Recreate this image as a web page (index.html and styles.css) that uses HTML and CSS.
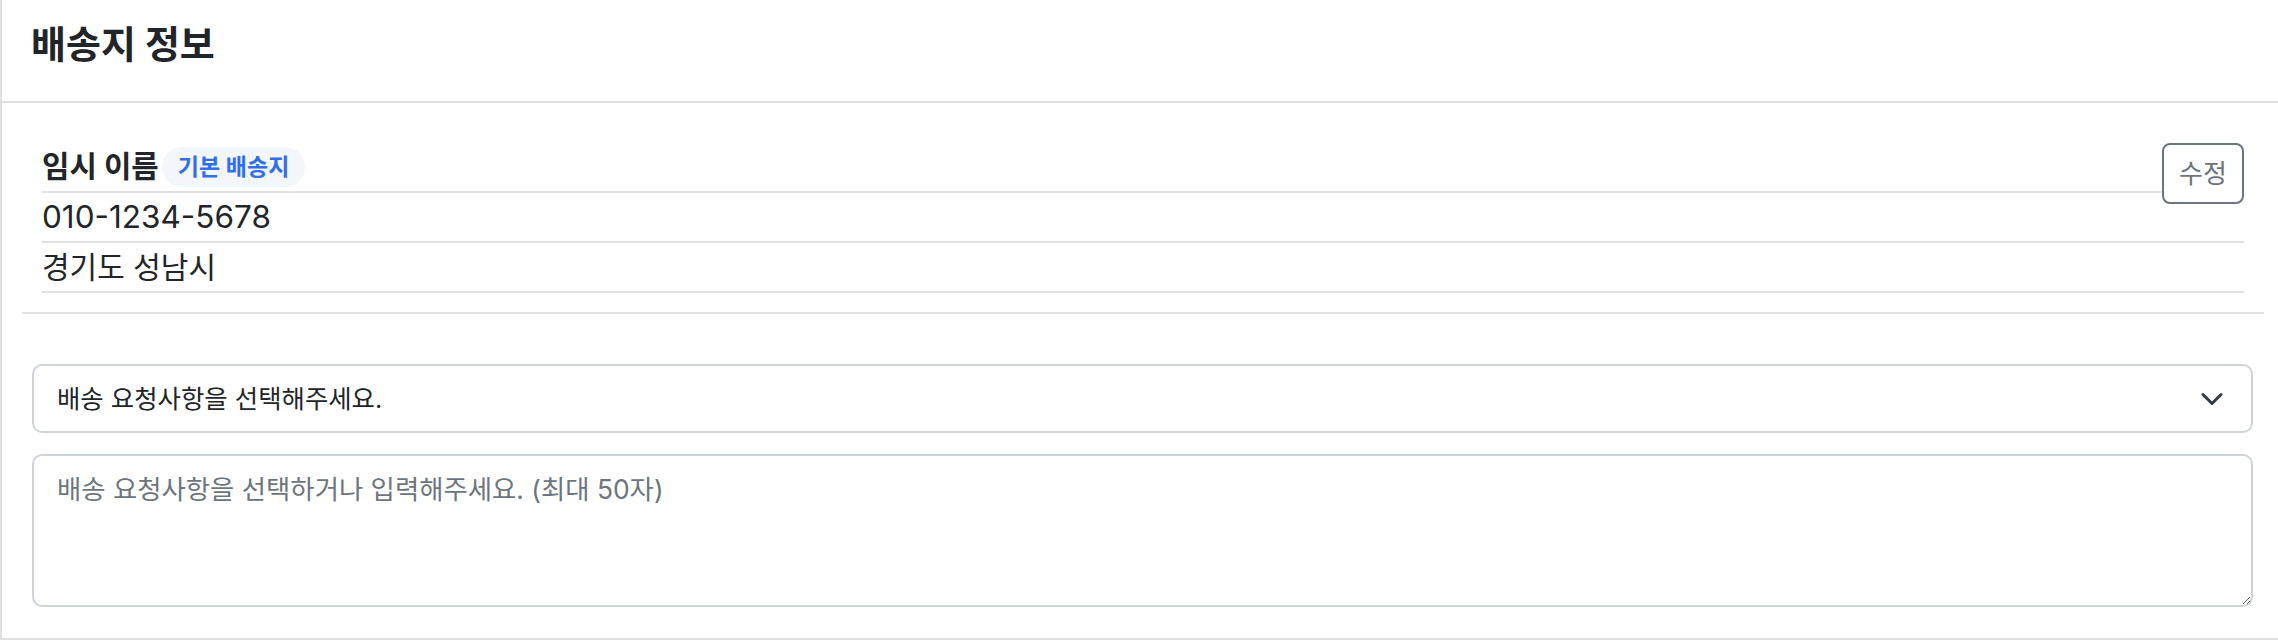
FILE: index.html
```html
<!DOCTYPE html>
<html lang="ko">
<head>
<meta charset="utf-8">
<title>배송지 정보</title>
<link rel="stylesheet" href="styles.css">
</head>
<body>
<div class="card">
  <div class="card-header">
    <h2 class="title">배송지 정보</h2>
  </div>
  <div class="card-body">
    <div class="address">
      <ul class="addr-list">
        <li class="addr-row"><strong class="name">임시 이름</strong><span class="badge">기본 배송지</span></li>
        <li class="addr-row phone">010-1234-5678</li>
        <li class="addr-row">경기도 성남시</li>
      </ul>
      <button class="edit-btn" type="button">수정</button>
    </div>
    <hr class="divider">
    <div class="request">
      <div class="select-wrap">
        <select class="select">
          <option>배송 요청사항을 선택해주세요.</option>
        </select>
        <svg class="chevron" width="22" height="13" viewBox="0 0 22 13" aria-hidden="true">
          <polyline points="2,2 11,11 20,2" fill="none" stroke="#343a40" stroke-width="3" stroke-linecap="round" stroke-linejoin="round"/>
        </svg>
      </div>
      <textarea class="memo" placeholder="배송 요청사항을 선택하거나 입력해주세요. (최대 50자)"></textarea>
    </div>
  </div>
</div>
</body>
</html>
```

FILE: styles.css
```css
* {
  box-sizing: border-box;
}

html, body {
  margin: 0;
  padding: 0;
  background: #ffffff;
}

body {
  font-family: Inter, "Noto Sans CJK KR", sans-serif;
  color: #212529;
}

.card {
  width: 100%;
  border-left: 2px solid #dfdfdf;
  border-bottom: 2px solid #dfdfdf;
  background: #ffffff;
}

.card-header {
  height: 103px;
  padding: 24px 29px 0;
  border-bottom: 2px solid #dfdfdf;
}

.title {
  margin: 0;
  font-size: 38px;
  line-height: 40px;
  font-weight: 700;
  color: #212529;
}

.card-body {
  padding: 40px 14px 31px 20px;
}

.address {
  position: relative;
  margin: 0 20px;
}

.addr-list {
  list-style: none;
  margin: 0;
  padding: 0;
}

.addr-row {
  display: flex;
  align-items: center;
  height: 50px;
  border-bottom: 2px solid #e0e0e0;
  font-size: 30px;
  line-height: 1;
  color: #212529;
}

.phone {
  font-size: 31.5px;
}

.name {
  font-size: 29.8px;
  font-weight: 700;
}

.badge {
  display: inline-flex;
  align-items: center;
  height: 40px;
  margin-left: 3px;
  padding: 0 16px;
  border-radius: 20px;
  background: #f3f6fb;
  color: #2f6fed;
  font-size: 23px;
  font-weight: 600;
}

.edit-btn {
  position: absolute;
  top: 0;
  right: 0;
  width: 82px;
  height: 61px;
  padding: 0;
  border: 2px solid #6c757d;
  border-radius: 8px;
  background: #ffffff;
  color: #6c757d;
  font-family: Inter, "Noto Sans CJK KR", sans-serif;
  font-size: 26px;
  line-height: 1;
}

.divider {
  margin: 19px 0 0;
  border: 0;
  border-top: 2px solid #e3e3e3;
  height: 0;
}

.request {
  display: flex;
  flex-direction: column;
  gap: 21px;
  margin: 50px 11px 0 10px;
}

.select-wrap {
  position: relative;
}

.select {
  display: block;
  width: 100%;
  height: 69px;
  padding: 0 60px 0 23px;
  border: 2px solid #ced4da;
  border-radius: 10px;
  background: #ffffff;
  color: #212529;
  font-family: Inter, "Noto Sans CJK KR", sans-serif;
  font-size: 25.4px;
  -webkit-appearance: none;
  appearance: none;
}

.chevron {
  position: absolute;
  right: 30px;
  top: 50%;
  transform: translateY(-50%);
  pointer-events: none;
}

.memo {
  display: block;
  width: 100%;
  height: 153px;
  padding: 14px 23px;
  border: 2px solid #ced4da;
  border-radius: 10px;
  background: #ffffff;
  color: #212529;
  font-family: Inter, "Noto Sans CJK KR", sans-serif;
  font-size: 26.4px;
  line-height: 1.45;
  resize: vertical;
}

.memo::placeholder {
  color: #6c757d;
  opacity: 1;
}
```
